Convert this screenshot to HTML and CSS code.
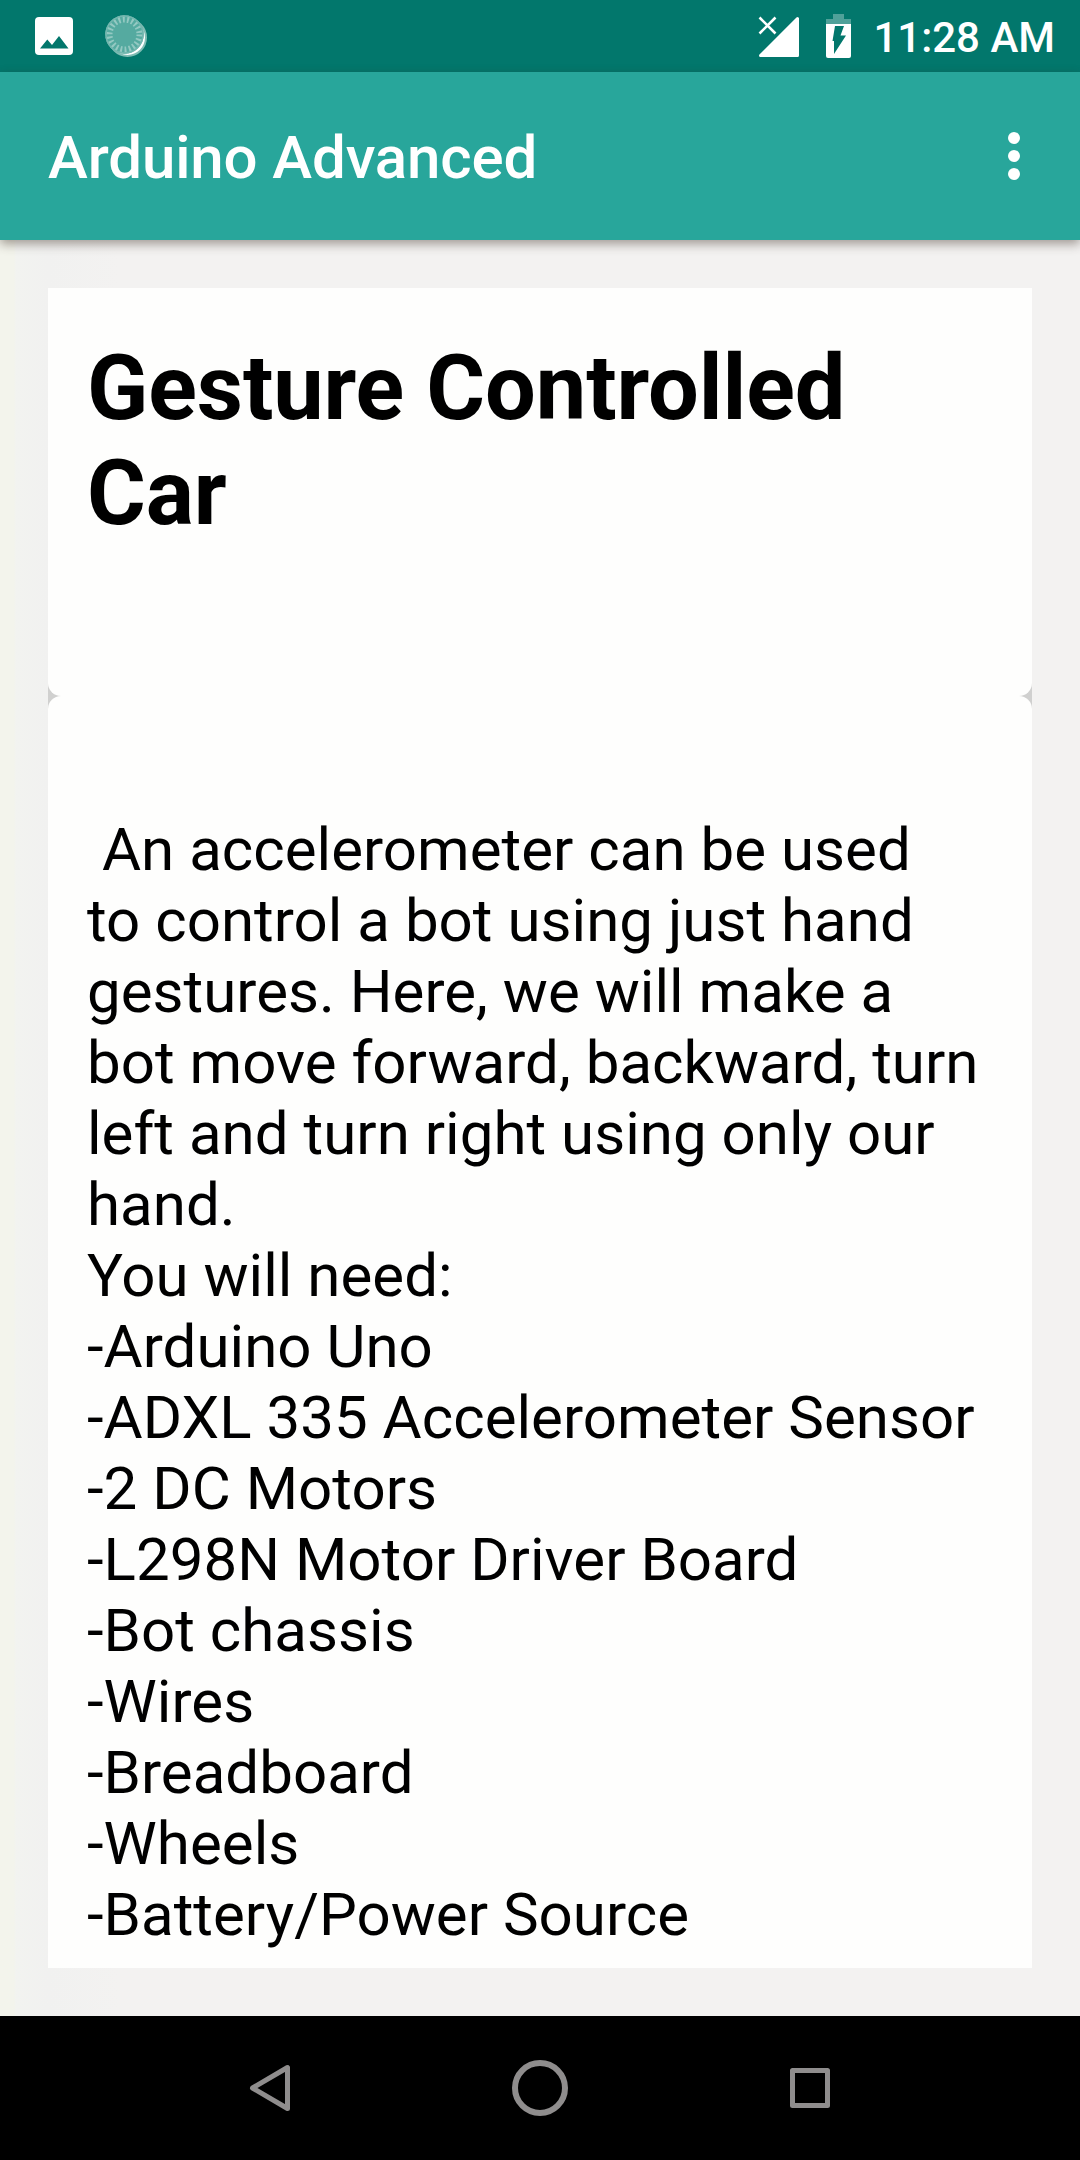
FILE: index.html
```
<!DOCTYPE html>
<html lang="en">
<head>
    <meta charset="UTF-8">
    <meta name="viewport" content="width=device-width, initial-scale=1.0">
    <title>Arduino Advanced</title>
    <link rel="stylesheet" href="styles.css">
</head>
<body>
    <div class="status-bar">
        <div class="notifications">
            <svg class="icon-image" width="38" height="38" viewBox="0 0 38 38">
                <rect width="38" height="38" rx="4" fill="#fff"/>
                <path d="M5 31.5 L12.3 22.5 L17 28 L24 19 L33.5 31.5 Z" fill="#02776c"/>
            </svg>
            <svg class="icon-sync" width="44" height="44" viewBox="0 0 44 44">
                <circle cx="22.5" cy="23.5" r="18.5" fill="#fff" stroke="#7fbcb4" stroke-width="2"/>
                <circle cx="19.5" cy="20.5" r="19.2" fill="#55aaa0"/>
                <circle cx="19.5" cy="20.5" r="15.5" fill="none" stroke="#94c9c2" stroke-width="7" stroke-dasharray="2 2.427"/>
                <circle cx="19.5" cy="20.5" r="18.5" fill="none" stroke="#72b6ae" stroke-width="1.6"/>
            </svg>
        </div>
        <div class="system">
            <svg class="icon-signal" width="42" height="42" viewBox="0 0 42 42">
                <path d="M39.5 2.5 V39.5 H2.5 Z" fill="#fff" stroke="#fff" stroke-width="3" stroke-linejoin="round"/>
                <path d="M1.5 1.5 L17.5 17.5 M17.5 1.5 L1.5 17.5" stroke="#02776c" stroke-width="4"/>
                <path d="M1.5 1.5 L17.5 17.5 M17.5 1.5 L1.5 17.5" stroke="#fff" stroke-width="2.6"/>
            </svg>
            <svg class="icon-battery" width="25" height="44" viewBox="0 0 25 44">
                <path d="M7 0 H18 V5 H25 V10 H0 V5 H7 Z" fill="#4fa199"/>
                <path d="M0 10 H25 V42 Q25 44 23 44 H2 Q0 44 0 42 Z" fill="#fff"/>
                <path d="M9 12 H18 L14.5 21.5 H20 L8 40 V27 H6.5 Z" fill="#02776c"/>
            </svg>
            <span class="clock">11:28 AM</span>
        </div>
    </div>

    <div class="toolbar">
        <span class="toolbar-title">Arduino Advanced</span>
        <svg class="menu" width="12" height="48" viewBox="0 0 12 48">
            <circle cx="6" cy="6" r="6"/>
            <circle cx="6" cy="24" r="6"/>
            <circle cx="6" cy="42" r="6"/>
        </svg>
    </div>

    <div class="content">
        <div class="scroll">
            <div class="card card-title">
                <h1>Gesture Controlled Car</h1>
            </div>
            <div class="card card-text">
                <p> An accelerometer can be used
to control a bot using just hand
gestures. Here, we will make a
bot move forward, backward, turn
left and turn right using only our
hand.
You will need:
-Arduino Uno
-ADXL 335 Accelerometer Sensor
-2 DC Motors
-L298N Motor Driver Board
-Bot chassis
-Wires
-Breadboard
-Wheels
-Battery/Power Source</p>
            </div>
        </div>
    </div>

    <div class="nav-bar">
        <svg width="60" height="60" viewBox="0 0 60 60">
            <path d="M47.5 9.5 V50.5 L12.5 30 Z"/>
        </svg>
        <svg width="60" height="60" viewBox="0 0 60 60">
            <circle cx="30" cy="30" r="25"/>
        </svg>
        <svg width="60" height="60" viewBox="0 0 60 60">
            <rect x="12.5" y="12.5" width="35" height="35"/>
        </svg>
    </div>
</body>
</html>
```
FILE: styles.css
```
* {
    box-sizing: border-box;
}
body {
    margin: 0;
    width: 1080px;
    height: 2160px;
    display: flex;
    flex-direction: column;
    overflow: hidden;
    font-family: Roboto, "Liberation Sans", sans-serif;
    background-color: #f2f2f0;
}
svg {
    display: block;
}

/* Status bar */
.status-bar {
    height: 72px;
    display: flex;
    justify-content: space-between;
    padding: 0 24px 0 35px;
    background-color: #02776c;
}
.notifications {
    display: flex;
    gap: 32px;
}
.icon-image {
    margin-top: 17px;
}
.icon-sync {
    margin-top: 14px;
}
.system {
    display: flex;
    align-items: flex-start;
}
.icon-signal {
    margin: 16px 26px 0 0;
}
.icon-battery {
    margin: 14px 22px 0 0;
}
.clock {
    margin-right: 1px;
    color: #fff;
    font-size: 42px;
    font-weight: 500;
    line-height: 75px;
}

/* Toolbar */
.toolbar {
    position: relative;
    z-index: 1;
    height: 168px;
    display: flex;
    align-items: center;
    justify-content: space-between;
    padding: 0 60px 0 48px;
    background-color: #28a69b;
    box-shadow: 0 4px 10px rgba(60, 45, 35, 0.45);
}
.toolbar-title {
    padding-top: 4px;
    color: #fff;
    font-size: 60px;
    font-weight: 500;
    line-height: 70px;
    letter-spacing: -0.12px;
}
.menu {
    fill: #fff;
}

/* Cards */
.content {
    height: 1776px;
    padding: 48px;
    background: linear-gradient(to right, #f3f4ec 0, #f3f4ec 14px, #f2f3f0 16px, #f1f1f0 48px, #f3f2f1 120px);
}
.scroll {
    height: 1680px;
    overflow: hidden;
    background-color: #d0d0cf;
}
.card {
    padding: 0 39px;
    background-color: #fefefd;
}
.card-title {
    height: 408px;
    padding-top: 48px;
    border-radius: 0 0 13px 13px;
}
.card-text {
    height: 1272px;
    padding-top: 118px;
    border-radius: 13px 13px 0 0;
}
h1 {
    margin: 0;
    color: #000;
    font-size: 90px;
    font-weight: 700;
    line-height: 105px;
    letter-spacing: -0.1px;
}
p {
    margin: 0;
    color: #000;
    font-size: 60px;
    line-height: 71px;
    letter-spacing: 0.03px;
    white-space: pre;
}

/* Navigation bar */
.nav-bar {
    height: 144px;
    display: flex;
    align-items: center;
    justify-content: center;
    gap: 210px;
    background-color: #000;
}
.nav-bar svg {
    fill: none;
    stroke: #8f8d8d;
    stroke-width: 5;
    stroke-linejoin: round;
}
.nav-bar circle {
    stroke-width: 6;
}
```
